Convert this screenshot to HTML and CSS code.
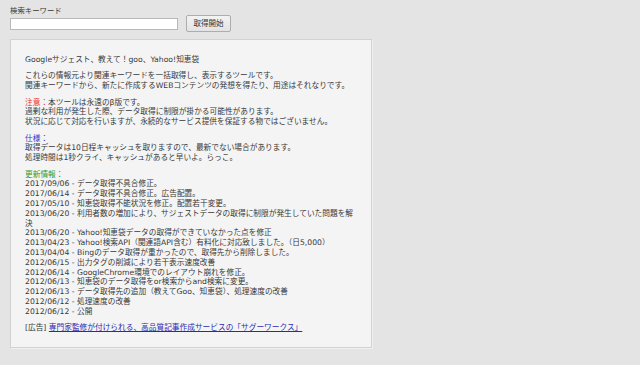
FILE: index.html
```html
<!DOCTYPE html>
<html lang="ja">
<head>
<meta charset="utf-8">
<title>関連キーワード取得ツール</title>
<link rel="stylesheet" href="styles.css">
</head>
<body>
<form class="search">
  <label class="search-label" for="kw">検索キーワード</label>
  <div class="search-row">
    <input id="kw" class="search-input" type="text">
    <button class="search-btn" type="button">取得開始</button>
  </div>
</form>
<div class="panel">
  <p>Googleサジェスト、教えて！goo、Yahoo!知恵袋</p>
  <p>これらの情報元より関連キーワードを一括取得し、表示するツールです。<br>関連キーワードから、新たに作成するWEBコンテンツの発想を得たり、用途はそれなりです。</p>
  <p><span class="t-red">注意：</span>本ツールは永遠のβ版です。<br>過剰な利用が発生した際、データ取得に制限が掛かる可能性があります。<br>状況に応じて対応を行いますが、永続的なサービス提供を保証する物ではございません。</p>
  <p><span class="t-blue">仕様：</span><br>取得データは10日程キャッシュを取りますので、最新でない場合があります。<br>処理時間は1秒クライ、キャッシュがあると早いよ。らっこ。</p>
  <p><span class="t-green">更新情報：</span><br>2017/09/06 - データ取得不具合修正。<br>2017/06/14 - データ取得不具合修正。広告配置。<br>2017/05/10 - 知恵袋取得不能状況を修正。配置若干変更。<br>2013/06/20 - 利用者数の増加により、サジェストデータの取得に制限が発生していた問題を解決<br>2013/06/20 - Yahoo!知恵袋データの取得ができていなかった点を修正<br>2013/04/23 - Yahoo!検索API（関連語API含む）有料化に対応致しました。（日5,000）<br>2013/04/04 - Bingのデータ取得が重かったので、取得先から削除しました。<br>2012/06/15 - 出力タグの削減により若干表示速度改善<br>2012/06/14 - GoogleChrome環境でのレイアウト崩れを修正。<br>2012/06/13 - 知恵袋のデータ取得をor検索からand検索に変更。<br>2012/06/13 - データ取得先の追加（教えてGoo、知恵袋）、処理速度の改善<br>2012/06/12 - 処理速度の改善<br>2012/06/12 - 公開</p>
  <p class="ad">[広告] <a href="#">専門家監修が付けられる、高品質記事作成サービスの「サグーワークス」</a></p>
</div>
</body>
</html>
```
FILE: styles.css
```css
html, body {
  margin: 0;
  padding: 0;
}
body {
  background: #e4e4e4;
  color: #383838;
  font-family: "DejaVu Sans", "Noto Sans CJK JP", sans-serif;
  font-size: 7.7px;
  line-height: 9.8px;
  padding: 6px 10px 0;
  min-height: 365px;
  box-sizing: border-box;
}
.search {
  margin: 0;
}
.search-label {
  display: block;
  height: 9px;
  font-size: 7.4px;
  line-height: 9px;
}
.search-row {
  display: flex;
  align-items: center;
  gap: 8px;
  height: 17px;
}
.search-input {
  width: 168px;
  height: 12px;
  box-sizing: border-box;
  margin: 0;
  padding: 0 2px;
  border: 1px solid #b8b8b8;
  background: #fff;
  font-size: 7.6px;
}
.search-btn {
  width: 45px;
  height: 17px;
  margin: 0;
  padding: 0;
  box-sizing: border-box;
  border: 1px solid #adadad;
  border-radius: 2px;
  background: linear-gradient(#f3f3f3, #e3e3e3);
  color: #333;
  font-family: "DejaVu Sans", "Noto Sans CJK JP", sans-serif;
  font-size: 7.5px;
  line-height: 15px;
}
.panel {
  margin-top: 7px;
  width: 362px;
  height: 309px;
  box-sizing: border-box;
  background: #f4f4f4;
  border: 1px solid #d2d2d2;
  box-shadow: 1px 1px 0 #f0f0f0;
  padding: 15px 15px 0 14px;
}
.panel p {
  margin: 0 0 6.6px;
}
.t-red { color: #e8352e; }
.t-blue { color: #3434c8; }
.t-green { color: #2f9a2f; }
.ad a {
  color: #2a2ab0;
  text-decoration: underline;
}
```
